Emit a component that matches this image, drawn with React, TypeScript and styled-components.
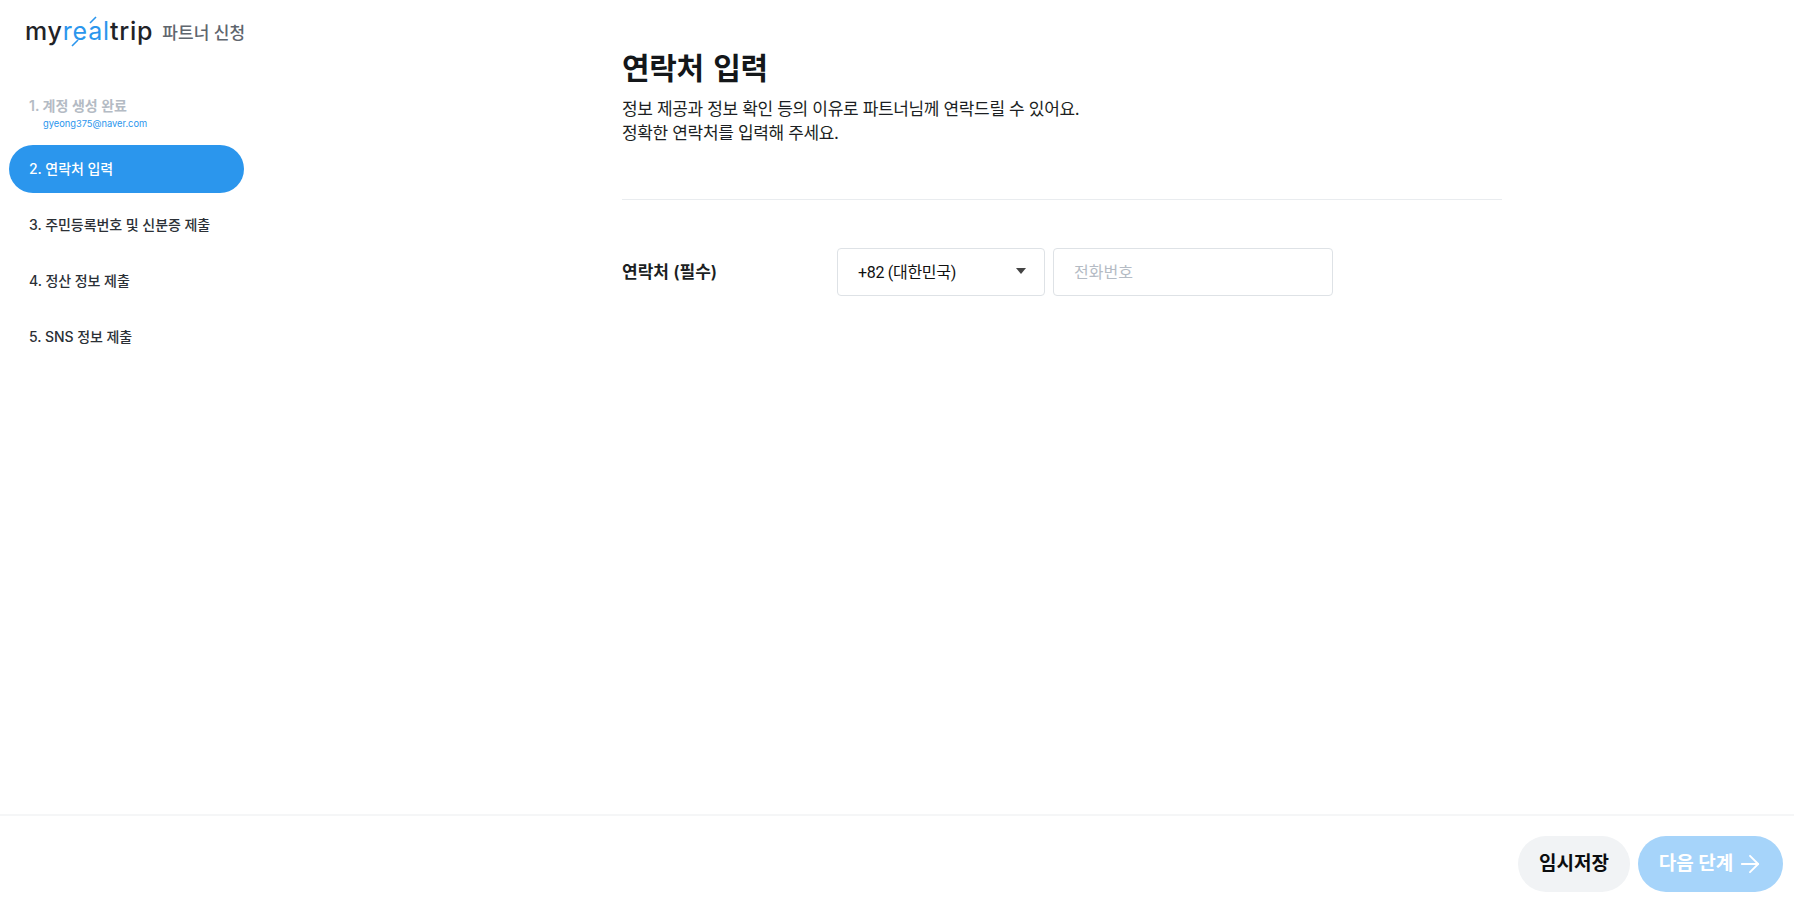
import styled, { createGlobalStyle } from 'styled-components';
import { ArrowRight } from 'lucide-react';

const FONT = `Inter, "Noto Sans CJK KR", sans-serif`;

const steps = [
  { label: '2. 연락처 입력', active: true },
  { label: '3. 주민등록번호 및 신분증 제출', active: false },
  { label: '4. 정산 정보 제출', active: false },
  { label: '5. SNS 정보 제출', active: false },
];

export default function App() {
  return (
    <>
      <GlobalStyle />
      <SPage>
        <SBody>
          <SSidebar>
            <SBrand>
              <SLogo>
                my
                <SLogoBlue>
                  real
                  <SLogoSlash viewBox="0 0 16 8" $pos="top" aria-hidden="true">
                    <path d="M4 7 L10 1" stroke="#2b96ed" strokeWidth="1.6" fill="none" />
                  </SLogoSlash>
                  <SLogoSlash viewBox="0 0 16 8" $pos="bottom" aria-hidden="true">
                    <path d="M4 7 L10 1" stroke="#2b96ed" strokeWidth="1.6" fill="none" />
                  </SLogoSlash>
                </SLogoBlue>
                trip
              </SLogo>
              <SBrandText>파트너 신청</SBrandText>
            </SBrand>
            <SSteps>
              <SDoneStep>
                <SDoneLabel>1. 계정 생성 완료</SDoneLabel>
                <SEmail>gyeong375@naver.com</SEmail>
              </SDoneStep>
              {steps.map((step) => (
                <SStep key={step.label} $active={step.active}>
                  {step.label}
                </SStep>
              ))}
            </SSteps>
          </SSidebar>
          <SMain>
            <STitle>연락처 입력</STitle>
            <SDesc>
              정보 제공과 정보 확인 등의 이유로 파트너님께 연락드릴 수 있어요.
              <br />
              정확한 연락처를 입력해 주세요.
            </SDesc>
            <SDivider />
            <SFormRow>
              <SLabel>연락처 (필수)</SLabel>
              <SSelect>
                +82 (대한민국)
                <SCaret viewBox="0 0 10 6" aria-hidden="true">
                  <path d="M0 0 H10 L5 6 Z" fill="#444" />
                </SCaret>
              </SSelect>
              <SInput placeholder="전화번호" />
            </SFormRow>
          </SMain>
        </SBody>
        <SFooter>
          <SSaveButton>임시저장</SSaveButton>
          <SNextButton>
            다음 단계
            <ArrowRight size={28} strokeWidth={1.6} />
          </SNextButton>
        </SFooter>
      </SPage>
    </>
  );
}

const GlobalStyle = createGlobalStyle`
  html, body {
    margin: 0;
    padding: 0;
    background: #fff;
    font-family: ${FONT};
  }
  * {
    box-sizing: border-box;
  }
`;

const SPage = styled.div`
  min-height: 100vh;
  display: flex;
  flex-direction: column;
`;

const SBody = styled.div`
  flex: 1;
  display: flex;
`;

const SSidebar = styled.aside`
  width: 235px;
  margin-left: 9px;
  flex-shrink: 0;
`;

const SBrand = styled.div`
  height: 62px;
  padding: 0 0 0 16px;
  display: flex;
  align-items: center;
  gap: 9px;
  white-space: nowrap;
`;

const SLogo = styled.div`
  font-family: Inter, sans-serif;
  font-size: 25px;
  font-weight: 500;
  letter-spacing: 0.8px;
  color: #1f2328;
  line-height: 1;
`;

const SLogoBlue = styled.span`
  position: relative;
  color: #2b96ed;
  font-weight: 400;
`;

const SLogoSlash = styled.svg<{ $pos: 'top' | 'bottom' }>`
  position: absolute;
  width: 16px;
  height: 8px;
  left: ${(p) => (p.$pos === 'top' ? '23px' : '5px')};
  top: ${(p) => (p.$pos === 'top' ? '0' : '23px')};
`;

const SBrandText = styled.div`
  font-size: 17px;
  font-weight: 500;
  color: #5f666e;
`;

const SSteps = styled.nav`
  margin-top: 27px;
  display: flex;
  flex-direction: column;
  gap: 8px;
`;

const SDoneStep = styled.div`
  height: 48px;
  padding-left: 20px;
`;

const SDoneLabel = styled.div`
  font-size: 14px;
  line-height: 20px;
  margin-top: 7px;
  font-weight: 600;
  color: #b4bbc4;
`;

const SEmail = styled.div`
  margin-top: 1px;
  padding-left: 14px;
  font-size: 9.3px;
  line-height: 14px;
  color: #2b96ed;
`;

const SStep = styled.div<{ $active: boolean }>`
  height: 48px;
  padding: 0 0 2px 20px;
  display: flex;
  align-items: center;
  border-radius: 24px;
  font-size: 14px;
  font-weight: 500;
  letter-spacing: -0.05px;
  color: ${(p) => (p.$active ? '#fff' : '#2b3036')};
  background: ${(p) => (p.$active ? '#2b96ed' : 'transparent')};
`;

const SMain = styled.main`
  margin-left: 378px;
  width: 880px;
  padding-top: 45px;
`;

const STitle = styled.h1`
  margin: 0;
  font-size: 30px;
  line-height: 46px;
  font-weight: 700;
  letter-spacing: -0.4px;
  word-spacing: 3px;
  color: #14171a;
`;

const SDesc = styled.p`
  margin: 6px 0 0;
  font-size: 17px;
  line-height: 24px;
  color: #1c1f23;
  letter-spacing: -0.35px;
`;

const SDivider = styled.hr`
  margin: 54px 0 0;
  border: 0;
  border-top: 1px solid #e9ecef;
`;

const SFormRow = styled.div`
  margin-top: 48px;
  display: flex;
  align-items: center;
`;

const SLabel = styled.div`
  width: 215px;
  padding-bottom: 3px;
  font-size: 17px;
  font-weight: 600;
  color: #1c1f23;
`;

const SSelect = styled.div`
  width: 208px;
  height: 48px;
  padding: 0 20px 2px;
  margin-right: 8px;
  display: flex;
  align-items: center;
  justify-content: space-between;
  border: 1px solid #dee2e6;
  border-radius: 4px;
  font-family: Roboto, "Noto Sans CJK KR", sans-serif;
  font-size: 16px;
  letter-spacing: -0.3px;
  color: #111;
`;

const SCaret = styled.svg`
  width: 10px;
  height: 6px;
  margin-right: -2px;
`;

const SInput = styled.input`
  width: 280px;
  height: 48px;
  padding: 0 20px;
  border: 1px solid #dee2e6;
  border-radius: 4px;
  outline: none;
  font-family: Roboto, "Noto Sans CJK KR", sans-serif;
  font-size: 16px;
  &::placeholder {
    color: #b4bbc4;
  }
`;

const SFooter = styled.footer`
  height: 88px;
  border-top: 2px solid #f5f6f7;
  padding: 20px 11px 0 0;
  display: flex;
  justify-content: flex-end;
  gap: 8px;
`;

const SButton = styled.button`
  height: 56px;
  border: 0;
  border-radius: 28px;
  font-family: ${FONT};
  font-size: 19px;
  font-weight: 700;
  display: flex;
  align-items: center;
  justify-content: center;
  padding: 0 0 5px;
`;

const SSaveButton = styled(SButton)`
  width: 112px;
  background: #f1f3f5;
  color: #0b0d0f;
`;

const SNextButton = styled(SButton)`
  width: 145px;
  gap: 3px;
  background: #a6d4fa;
  color: #fff;
  & > svg {
    margin-top: 5px;
    margin-right: -2px;
  }
`;
